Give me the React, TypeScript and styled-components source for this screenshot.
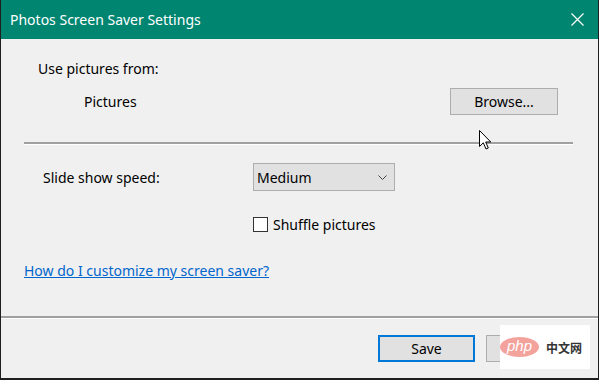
import styled, { createGlobalStyle } from "styled-components";

const GlobalStyle = createGlobalStyle`
  html, body {
    margin: 0;
    padding: 0;
    background: #f0f0f0;
  }
  body {
    font-family: "Noto Sans", "Open Sans", sans-serif;
    font-size: 14px;
    color: #000;
  }
`;

export default function App() {
  return (
    <>
      <GlobalStyle />
      <Window>
        <TitleBar>
          <Title>Photos Screen Saver Settings</Title>
          <CloseIcon viewBox="0 0 13 13">
            <path d="M0.5 0.5 L12.5 12.5 M12.5 0.5 L0.5 12.5" />
          </CloseIcon>
        </TitleBar>
        <Body>
          <Content>
            <SourceLabel>Use pictures from:</SourceLabel>
            <SourceRow>
              <FolderName>Pictures</FolderName>
              <Button type="button" $width={108}>
                Browse...
              </Button>
            </SourceRow>
            <Separator />
            <SpeedRow>
              <SpeedLabel>Slide show speed:</SpeedLabel>
              <Select>
                <span>Medium</span>
                <Chevron viewBox="0 0 9 5">
                  <path d="M0.5 0.5 L4.5 4.5 L8.5 0.5" />
                </Chevron>
              </Select>
            </SpeedRow>
            <CheckRow>
              <Box />
              <span>Shuffle pictures</span>
            </CheckRow>
            <HelpLink href="#">How do I customize my screen saver?</HelpLink>
          </Content>
        </Body>
        <Footer>
          <Button type="button" $primary>
            Save
          </Button>
          <Button type="button">Cancel</Button>
        </Footer>
        <Cursor viewBox="0 0 13 21">
          <path d="M0.5 0.5 L0.5 16.5 L4.3 12.8 L7 19 L9.3 18 L6.7 12 L11.8 12 Z" />
        </Cursor>
        <Watermark>
          <PhpBadge>php</PhpBadge>
          <WatermarkText>中文网</WatermarkText>
        </Watermark>
      </Window>
    </>
  );
}

const Window = styled.div`
  position: relative;
  width: 599px;
  height: 380px;
  box-sizing: border-box;
  border-left: 1px solid #1f1f1f;
  border-right: 1px solid #1f1f1f;
  border-bottom: 2px solid #1f1f1f;
  display: flex;
  flex-direction: column;
  background: #f0f0f0;
  overflow: hidden;
`;

const TitleBar = styled.div`
  height: 39px;
  flex-shrink: 0;
  background: #008571;
  display: flex;
  align-items: center;
  justify-content: space-between;
  padding: 0 14px 0 9px;
`;

const Title = styled.span`
  color: #fff;
  font-size: 14px;
`;

const CloseIcon = styled.svg`
  width: 13px;
  height: 13px;
  stroke: #fff;
  stroke-width: 1.2;
  fill: none;
`;

const Body = styled.div`
  flex: 1;
  display: flex;
  flex-direction: column;
`;

const Content = styled.div`
  display: flex;
  flex-direction: column;
  padding: 20px 25px 0 23px;
`;

const SourceLabel = styled.div`
  margin-left: 14px;
  line-height: 20px;
`;

const SourceRow = styled.div`
  display: flex;
  align-items: center;
  justify-content: space-between;
  margin-top: 9px;
  padding: 0 15px 0 60px;
`;

const FolderName = styled.span``;

const Button = styled.button<{ $primary?: boolean; $width?: number }>`
  width: ${(p) => p.$width ?? 97}px;
  height: 27px;
  box-sizing: border-box;
  background: #e1e1e1;
  border: ${(p) => (p.$primary ? "2px solid #0078d7" : "1px solid #adadad")};
  font-family: inherit;
  font-size: 14px;
  color: #000;
  padding: 0;
  margin: 0;
  border-radius: 0;
`;

const Separator = styled.div`
  margin-top: 27px;
  border-top: 2px solid #a0a0a0;
  border-bottom: 1px solid #fff;
`;

const SpeedRow = styled.div`
  display: flex;
  align-items: center;
  margin-top: 18px;
`;

const SpeedLabel = styled.span`
  margin-left: 19px;
  width: 210px;
`;

const Select = styled.div`
  width: 142px;
  height: 28px;
  box-sizing: border-box;
  background: #e1e1e1;
  border: 1px solid #adadad;
  display: flex;
  align-items: center;
  justify-content: space-between;
  padding: 0 7px 0 3px;
`;

const Chevron = styled.svg`
  width: 9px;
  height: 5px;
  stroke: #444;
  stroke-width: 1;
  fill: none;
`;

const CheckRow = styled.label`
  display: flex;
  align-items: center;
  gap: 5px;
  margin: 24px 0 0 229px;
`;

const Box = styled.span`
  width: 15px;
  height: 15px;
  box-sizing: border-box;
  border: 1px solid #333;
  background: #fff;
`;

const HelpLink = styled.a`
  align-self: flex-start;
  margin-top: 27px;
  color: #0066cc;
  text-decoration: underline;
`;

const Footer = styled.div`
  height: 62px;
  box-sizing: border-box;
  border-top: 2px solid #a0a0a0;
  box-shadow: inset 0 1px 0 #fff;
  display: flex;
  justify-content: flex-end;
  align-items: flex-start;
  gap: 11px;
  padding: 17px 15px 0 0;
`;

const Cursor = styled.svg`
  position: absolute;
  left: 478px;
  top: 130px;
  width: 13px;
  height: 21px;
  fill: #fff;
  stroke: #000;
  stroke-width: 1;
`;

const Watermark = styled.div`
  position: absolute;
  left: 499px;
  top: 325px;
  width: 90px;
  height: 44px;
  background: #fff;
  display: flex;
  align-items: center;
  gap: 7px;
`;

const PhpBadge = styled.span`
  width: 39px;
  height: 20px;
  border-radius: 50%;
  background: #f3a29c;
  color: #fff;
  font-style: italic;
  font-size: 15px;
  line-height: 18px;
  text-align: center;
  font-family: "Liberation Sans", sans-serif;
`;

const WatermarkText = styled.span`
  font-family: "Noto Sans CJK SC", sans-serif;
  font-size: 12px;
  font-weight: 700;
  color: #333;
`;
